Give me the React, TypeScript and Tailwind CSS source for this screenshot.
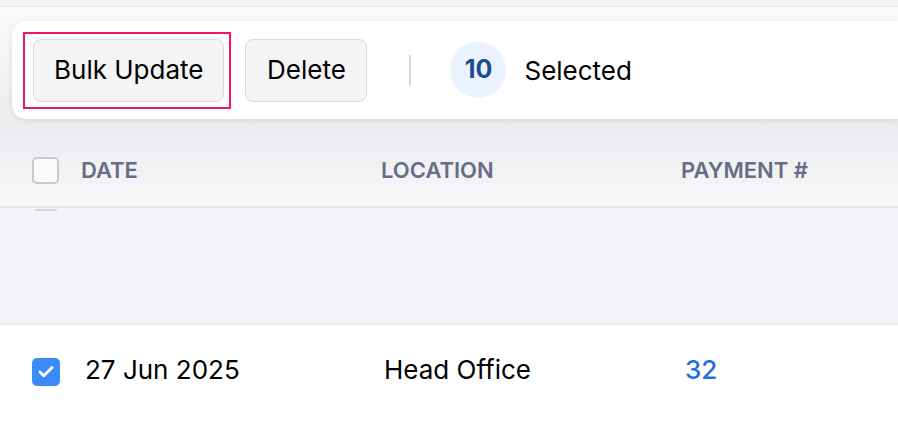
import { Check } from "lucide-react";

const COLUMNS = [
  { label: "Date", width: "w-[300px]" },
  { label: "Location", width: "w-[300px]" },
  { label: "Payment #", width: "w-[200px]" },
];

export default function App() {
  return (
    <div
      className="w-[898px] h-[436px] overflow-hidden bg-[#f4f4f8] text-black flex flex-col"
      style={{ fontFamily: "Inter, 'Noto Sans', sans-serif" }}
    >
      {/* top strip */}
      <div className="h-[7px] shrink-0 bg-[#f4f4f8] border-b border-[#e9e9ee]" />

      {/* bulk action bar */}
      <div className="shrink-0 bg-gradient-to-b from-[#fafafa] to-[#ebebee] pt-[14px] pb-[14px] pl-[12px]">
        <div className="h-[98px] bg-white rounded-l-[14px] shadow-[0_1px_6px_rgba(0,0,0,0.10)] flex items-center pl-[11px]">
          <div className="border-2 border-[#f0155c] pt-[5px] pb-[5px] pl-[8px] pr-[5px]">
            <button className="h-[63px] px-[20px] rounded-[8px] bg-[#f4f4f4] border border-[#dadada] text-[26px] leading-none">
              Bulk Update
            </button>
          </div>
          <button className="ml-[14px] h-[63px] w-[122px] rounded-[8px] bg-[#f4f4f4] border border-[#dadada] text-[26px] leading-none">
            Delete
          </button>
          <div className="ml-[42px] w-[2px] h-[30px] bg-[#d6d6e2]" />
          <div className="ml-[39px] w-[56px] h-[56px] rounded-full bg-[#eaf2fd] flex items-center justify-center text-[25px] font-bold text-[#1b4d8f]">
            10
          </div>
          <span className="ml-[18px] text-[26px]">Selected</span>
        </div>
      </div>

      {/* table header */}
      <div className="h-[75px] shrink-0 border-t border-b-2 border-[#e6e6eb] bg-gradient-to-b from-[#ececf0] to-[#f8f8fa] flex items-center pl-[32px]">
        <div className="w-[27px] h-[27px] rounded-[5px] border-2 border-[#c9c9cc] bg-white/60" />
        <div className="flex ml-[22px]">
          {COLUMNS.map((c) => (
            <div
              key={c.label}
              className={`${c.width} text-[22px] font-semibold uppercase text-[#676d87]`}
            >
              {c.label}
            </div>
          ))}
        </div>
      </div>

      {/* scrolled-away row area */}
      <div className="h-[117px] shrink-0 bg-[#f4f4f8] border-b-2 border-[#e8e8ee] relative">
        <div className="absolute left-[35px] top-[1px] w-[22px] h-[2px] rounded-full bg-[#d4d4d8]" />
      </div>

      {/* selected row */}
      <div className="flex-1 bg-white flex items-start pt-[33px] pl-[32px]">
        <div className="w-[28px] h-[28px] rounded-[5px] bg-[#3d8bf6] flex items-center justify-center">
          <Check className="w-[18px] h-[18px] text-white" strokeWidth={4} />
        </div>
        <div className="flex ml-[25px] -mt-[2px] text-[26px] leading-[28px]">
          <div className="w-[299px]">27 Jun 2025</div>
          <div className="w-[301px]">Head Office</div>
          <div className="text-[#1f6fde] font-medium">32</div>
        </div>
      </div>
    </div>
  );
}
